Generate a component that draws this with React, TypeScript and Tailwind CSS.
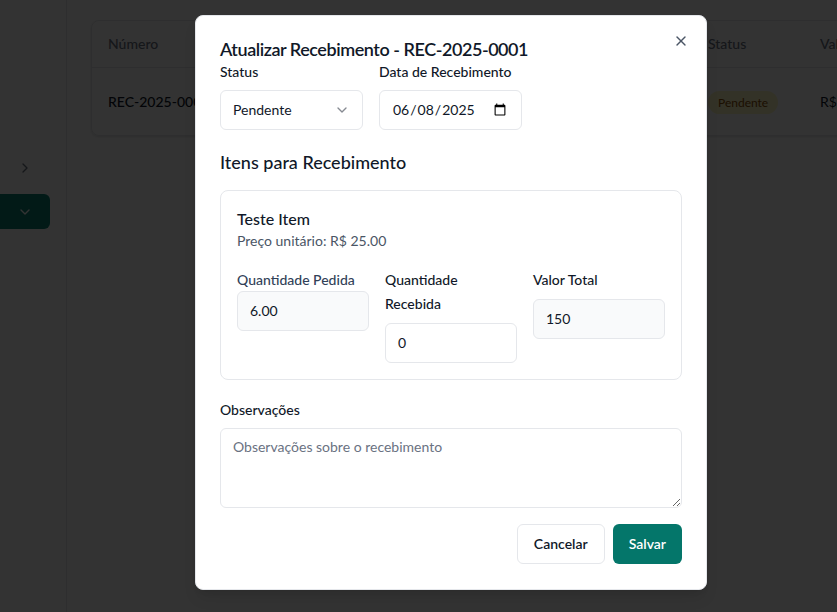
import { ChevronDown, ChevronRight, X } from 'lucide-react'

const font = { fontFamily: 'Lato, "Noto Sans", sans-serif' }

function Background() {
  return (
    <div className="flex h-[612px] w-[837px] overflow-hidden bg-white">
      <aside className="flex w-[67px] shrink-0 flex-col border-r border-gray-200 pt-[158px]">
        <div className="flex h-5 w-[50px] items-center justify-center text-gray-500">
          <ChevronRight className="h-4 w-4" />
        </div>
        <div className="mt-4 flex h-[35px] w-[50px] items-center justify-center rounded-r-md bg-[#0a8273] text-white">
          <ChevronDown className="h-4 w-4" />
        </div>
      </aside>
      <main className="flex-1 pl-6 pt-5">
        <div className="w-[800px] rounded-lg border border-gray-200 shadow-sm">
          <div className="flex h-[47px] items-center border-b border-gray-200 px-4 text-sm font-medium text-gray-500">
            <div className="w-[600px] shrink-0">Número</div>
            <div className="w-[112px] shrink-0">Status</div>
            <div className="whitespace-nowrap">Valor</div>
          </div>
          <div className="flex h-[67px] items-center px-4 text-sm">
            <div className="w-[600px] shrink-0 font-medium text-gray-900">REC-2025-0001</div>
            <div className="w-[112px] shrink-0">
              <span className="rounded-full bg-yellow-100 px-2.5 py-1 text-xs text-yellow-800">Pendente</span>
            </div>
            <div className="whitespace-nowrap text-gray-900">R$ 150.00</div>
          </div>
        </div>
      </main>
    </div>
  )
}

function Field({ value, muted }: { value: string; muted?: boolean }) {
  return (
    <div
      className={`flex h-10 items-center rounded-md border border-gray-200 px-3 text-sm text-gray-900 ${
        muted ? 'bg-gray-50' : 'bg-white'
      }`}
    >
      {value}
    </div>
  )
}

export default function App() {
  return (
    <div className="relative h-[612px] w-[837px] overflow-hidden text-gray-900" style={font}>
      <Background />
      <div className="absolute inset-0 bg-black/80" />

      <div className="absolute left-[195px] top-[15px] w-[512px] rounded-lg border border-gray-200 bg-white p-6 pb-[25px] shadow-lg">
        <button className="absolute right-[17px] top-[17px] text-gray-600">
          <X className="h-4 w-4" />
        </button>

        <h2 className="text-lg font-semibold leading-[18px] tracking-tight">Atualizar Recebimento - REC-2025-0001</h2>

        <div className="mt-1 flex gap-4">
          <div className="w-[143px]">
            <label className="block text-sm font-medium leading-5">Status</label>
            <div className="mt-2 flex h-10 items-center justify-between rounded-md border border-gray-200 bg-white px-3 text-sm">
              <span>Pendente</span>
              <ChevronDown className="h-4 w-4 opacity-50" />
            </div>
          </div>
          <div className="w-[143px]">
            <label className="block text-sm font-medium leading-5">Data de Recebimento</label>
            <input
              type="date"
              defaultValue="2025-06-08"
              className="mt-2 h-10 w-full rounded-md border border-gray-200 bg-white px-3 text-sm"
            />
          </div>
        </div>

        <h3 className="mt-[18px] text-lg font-medium leading-7">Itens para Recebimento</h3>

        <div className="mt-[14px] rounded-lg border border-gray-200 p-4">
          <div className="text-base font-medium leading-6">Teste Item</div>
          <div className="text-sm leading-5 text-gray-600">Preço unitário: R$ 25.00</div>

          <div className="mt-[17px] grid grid-cols-3 gap-4">
            <div>
              <label className="block h-[23px] text-sm font-medium leading-6 text-slate-700">Quantidade Pedida</label>
              <Field value="6.00" muted />
            </div>
            <div>
              <label className="block max-w-[100px] text-sm font-medium leading-6">Quantidade Recebida</label>
              <div className="mt-[7px]">
                <Field value="0" />
              </div>
            </div>
            <div>
              <label className="block text-sm font-medium leading-6">Valor Total</label>
              <div className="mt-[7px]">
                <Field value="150" muted />
              </div>
            </div>
          </div>
        </div>

        <label className="mt-5 block text-sm font-medium leading-5">Observações</label>
        <textarea
          placeholder="Observações sobre o recebimento"
          className="mt-2 block min-h-[80px] w-full rounded-md border border-gray-200 px-3 py-2 text-sm placeholder:text-gray-500"
        />

        <div className="mt-4 flex justify-end gap-2">
          <button className="h-10 rounded-md border border-gray-200 bg-white px-4 text-sm font-semibold">Cancelar</button>
          <button className="h-10 rounded-md bg-[#04766a] px-4 text-sm font-semibold text-white">Salvar</button>
        </div>
      </div>
    </div>
  )
}
